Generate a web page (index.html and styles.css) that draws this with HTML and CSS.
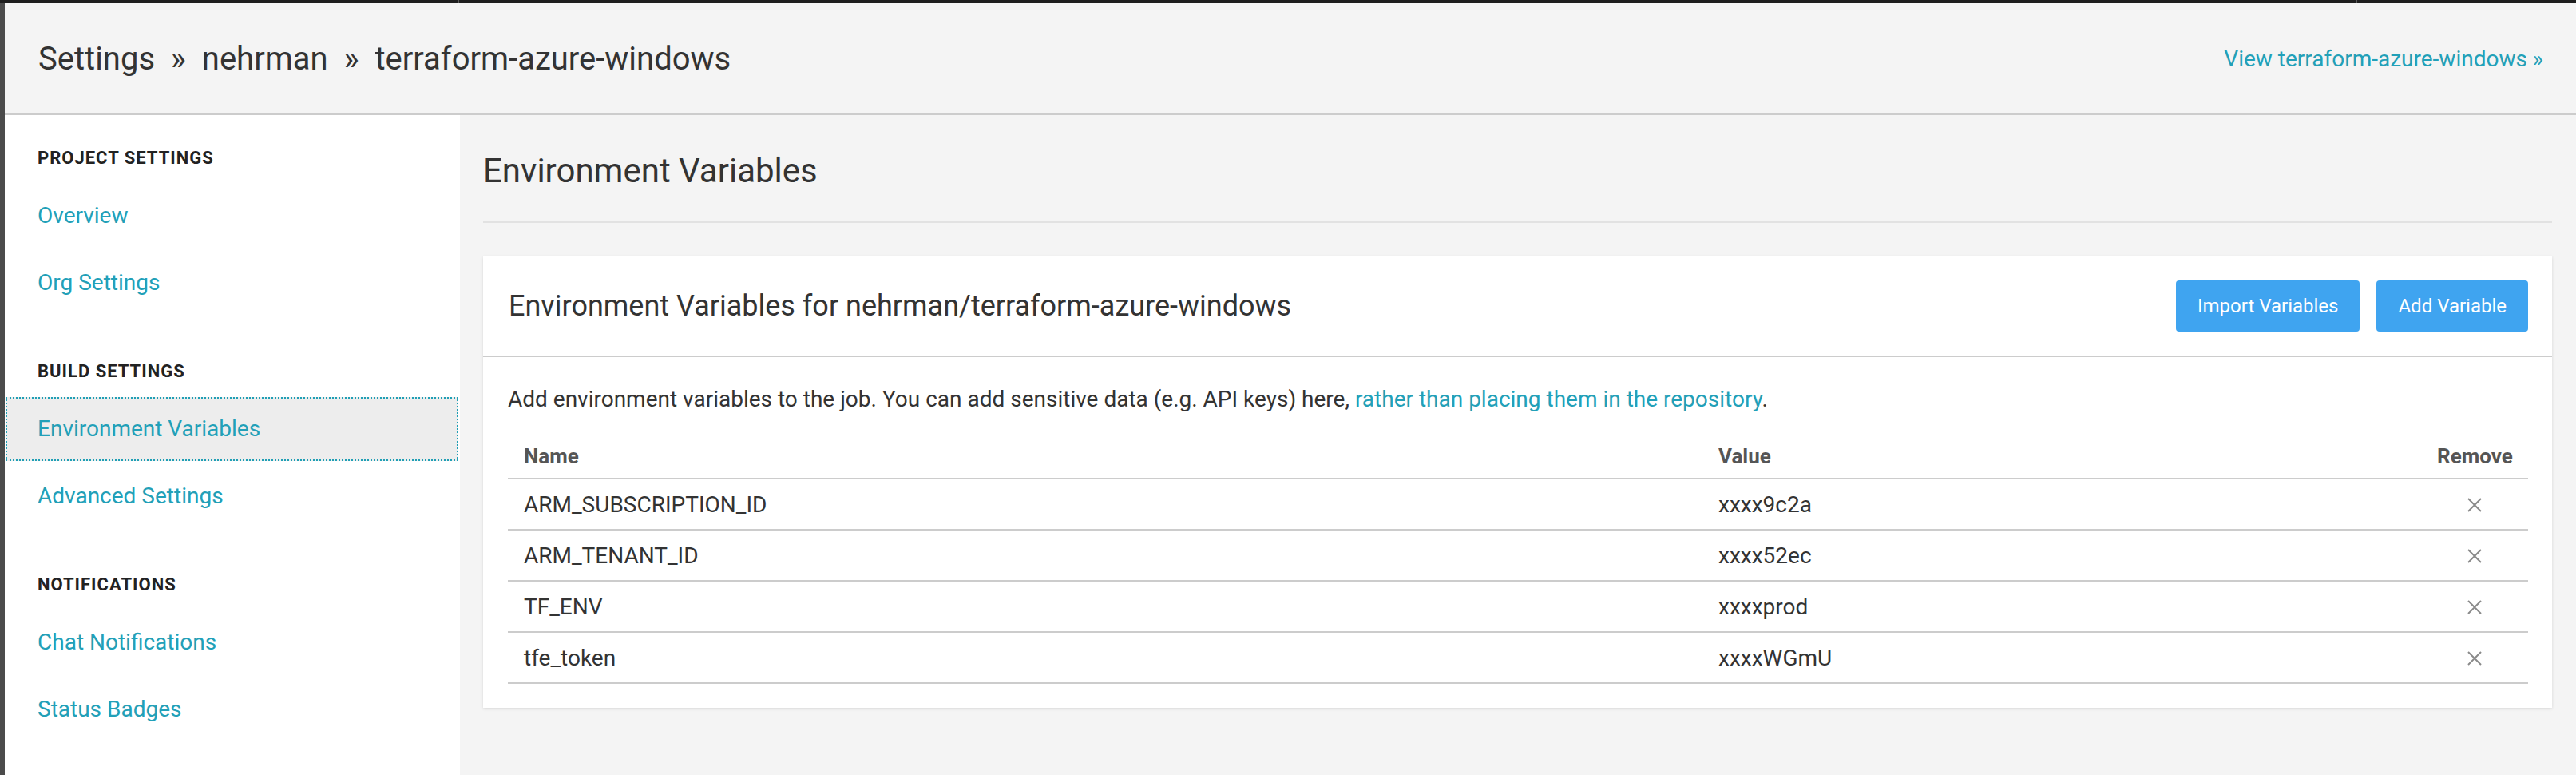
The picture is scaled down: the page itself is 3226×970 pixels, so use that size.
FILE: index.html
```html
<!DOCTYPE html>
<html lang="en">
<head>
<meta charset="utf-8">
<title>Environment Variables - terraform-azure-windows</title>
<link rel="stylesheet" href="styles.css">
</head>
<body>
<div class="topbar">
  <span class="seg seg-a"></span>
  <span class="seg seg-b"></span>
  <span class="seg seg-c"></span>
  <span class="seg seg-d"></span>
</div>
<div class="window">
  <div class="leftstrip"></div>
  <div class="app">
    <header class="page-header">
      <div class="crumbs">
        <span>Settings</span><span class="sep">»</span><span>nehrman</span><span class="sep">»</span><span>terraform-azure-windows</span>
      </div>
      <a class="view-link" href="#">View terraform-azure-windows »</a>
    </header>
    <div class="layout">
      <aside class="sidebar">
        <div class="nav-section">
          <div class="nav-heading">PROJECT SETTINGS</div>
          <a class="nav-item" href="#">Overview</a>
          <a class="nav-item" href="#">Org Settings</a>
        </div>
        <div class="nav-section">
          <div class="nav-heading">BUILD SETTINGS</div>
          <a class="nav-item active" href="#">Environment Variables</a>
          <a class="nav-item" href="#">Advanced Settings</a>
        </div>
        <div class="nav-section">
          <div class="nav-heading">NOTIFICATIONS</div>
          <a class="nav-item" href="#">Chat Notifications</a>
          <a class="nav-item" href="#">Status Badges</a>
        </div>
      </aside>
      <main class="main">
        <h1 class="page-title">Environment Variables</h1>
        <section class="card">
          <div class="card-header">
            <h2 class="card-title">Environment Variables for nehrman/terraform-azure-windows</h2>
            <div class="actions">
              <button class="btn">Import Variables</button>
              <button class="btn">Add Variable</button>
            </div>
          </div>
          <div class="card-body">
            <p class="desc">Add environment variables to the job. You can add sensitive data (e.g. API keys) here, <a href="#">rather than placing them in the repository</a>.</p>
            <table class="vars">
              <colgroup>
                <col class="col-name">
                <col class="col-value">
                <col class="col-remove">
              </colgroup>
              <thead>
                <tr><th>Name</th><th>Value</th><th class="remove-h">Remove</th></tr>
              </thead>
              <tbody>
                <tr><td>ARM_SUBSCRIPTION_ID</td><td>xxxx9c2a</td><td class="remove"><svg class="x" viewBox="0 0 20 18" width="20" height="18"><path d="M2 1 L18 17 M18 1 L2 17"/></svg></td></tr>
                <tr><td>ARM_TENANT_ID</td><td>xxxx52ec</td><td class="remove"><svg class="x" viewBox="0 0 20 18" width="20" height="18"><path d="M2 1 L18 17 M18 1 L2 17"/></svg></td></tr>
                <tr><td>TF_ENV</td><td>xxxxprod</td><td class="remove"><svg class="x" viewBox="0 0 20 18" width="20" height="18"><path d="M2 1 L18 17 M18 1 L2 17"/></svg></td></tr>
                <tr><td>tfe_token</td><td>xxxxWGmU</td><td class="remove"><svg class="x" viewBox="0 0 20 18" width="20" height="18"><path d="M2 1 L18 17 M18 1 L2 17"/></svg></td></tr>
              </tbody>
            </table>
          </div>
        </section>
      </main>
    </div>
  </div>
</div>
</body>
</html>
```
FILE: styles.css
```css
* { box-sizing: border-box; }
html, body {
  margin: 0;
  padding: 0;
  height: 970px;
  overflow: hidden;
  font-family: Roboto, "Liberation Sans", Arial, sans-serif;
  color: #333;
  background: #f4f4f4;
}
a { color: #22a0b8; text-decoration: none; }

.topbar {
  display: flex;
  height: 4px;
  background: #1e1e1e;
}
.seg { display: block; height: 4px; border-right: 1px solid #5a5a5a; }
.seg-a { width: 575px; }
.seg-b { width: 2377px; }
.seg-c { width: 138px; }
.seg-d { flex: 1; border-right: none; }

.window {
  display: flex;
  height: 966px;
}
.leftstrip {
  width: 6px;
  background: #4b4b4b;
  flex: none;
}
.app {
  flex: 1;
  display: flex;
  flex-direction: column;
  min-width: 0;
}

.page-header {
  height: 140px;
  flex: none;
  display: flex;
  align-items: center;
  justify-content: space-between;
  padding: 0 41px 0 42px;
  background: #f4f4f4;
  border-bottom: 2px solid #cccccc;
}
.crumbs {
  font-size: 40px;
  font-weight: 400;
  color: #333;
  white-space: nowrap;
}
.crumbs .sep { margin: 0 20px; }
.view-link {
  font-size: 28px;
}

.layout {
  flex: 1;
  display: flex;
  min-height: 0;
}

.sidebar {
  width: 570px;
  flex: none;
  background: #fff;
  padding-top: 42px;
}
.nav-section + .nav-section { margin-top: 59px; }
.nav-heading {
  font-size: 22px;
  line-height: 24px;
  font-weight: 700;
  letter-spacing: 1px;
  color: #222;
  padding-left: 41px;
  margin-bottom: 20px;
}
.nav-item {
  display: block;
  margin: 0 2px 4px 1px;
  padding: 18px 0 18px 38px;
  font-size: 28px;
  line-height: 40px;
  border: 2px dotted transparent;
}
.nav-item.active {
  background: #ededed;
  border-color: #1f9fb5;
}

.main {
  flex: 1;
  min-width: 0;
  padding: 46px 30px 0 29px;
  background: #f4f4f4;
}
.page-title {
  margin: 0;
  font-size: 42px;
  line-height: 48px;
  font-weight: 400;
  color: #333;
  padding-bottom: 39px;
  border-bottom: 2px solid #e2e2e2;
}

.card {
  margin-top: 42px;
  background: #fff;
  box-shadow: 0 1px 4px rgba(0, 0, 0, 0.12);
}
.card-header {
  height: 126px;
  display: flex;
  align-items: center;
  justify-content: space-between;
  padding: 0 30px 0 32px;
  border-bottom: 2px solid #cccccc;
}
.card-title {
  margin: 0;
  font-size: 36px;
  font-weight: 400;
  color: #333;
}
.actions { display: flex; gap: 21px; }
.btn {
  height: 64px;
  padding: 0 27px;
  border: none;
  border-radius: 4px;
  background: #3fa4f0;
  color: #fff;
  font-family: Roboto, "Liberation Sans", Arial, sans-serif;
  font-size: 24px;
  font-weight: 400;
}

.card-body {
  padding: 33px 30px 30px 31px;
}
.desc {
  margin: 0 0 16px;
  font-size: 28px;
  line-height: 40px;
  color: #333;
}

.vars {
  width: 100%;
  border-collapse: separate;
  border-spacing: 0;
  table-layout: fixed;
}
.col-name { width: 1496px; }
.col-remove { width: 134px; }
.vars th, .vars td {
  padding: 12px 20px 10px;
  line-height: 40px;
  border-bottom: 2px solid #cccccc;
  vertical-align: middle;
  text-align: left;
  white-space: nowrap;
}
.vars th {
  font-size: 26px;
  font-weight: 700;
  color: #555;
  padding: 15px 20px 7px;
}
.vars th.remove-h { text-align: right; }
.vars td {
  font-size: 28px;
  color: #333;
}
.vars td.remove { text-align: center; line-height: 0; height: 64px; }
.x {
  display: inline-block;
  vertical-align: middle;
  stroke: #8a8a8a;
  stroke-width: 2;
  fill: none;
}
```
